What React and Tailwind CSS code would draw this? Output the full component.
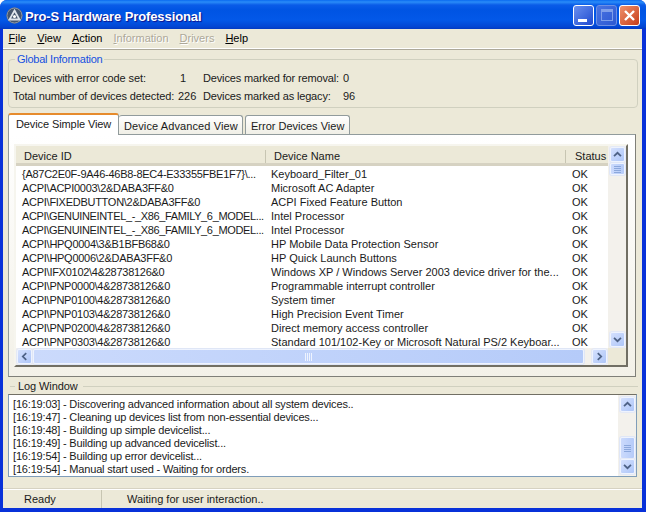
import React from "react";

const rows = [
  ["{A87C2E0F-9A46-46B8-8EC4-E33355FBE1F7}\\...", "Keyboard_Filter_01"],
  ["ACPI\\ACPI0003\\2&DABA3FF&0", "Microsoft AC Adapter"],
  ["ACPI\\FIXEDBUTTON\\2&DABA3FF&0", "ACPI Fixed Feature Button"],
  ["ACPI\\GENUINEINTEL_-_X86_FAMILY_6_MODEL...", "Intel Processor"],
  ["ACPI\\GENUINEINTEL_-_X86_FAMILY_6_MODEL...", "Intel Processor"],
  ["ACPI\\HPQ0004\\3&B1BFB68&0", "HP Mobile Data Protection Sensor"],
  ["ACPI\\HPQ0006\\2&DABA3FF&0", "HP Quick Launch Buttons"],
  ["ACPI\\IFX0102\\4&28738126&0", "Windows XP / Windows Server 2003 device driver for the..."],
  ["ACPI\\PNP0000\\4&28738126&0", "Programmable interrupt controller"],
  ["ACPI\\PNP0100\\4&28738126&0", "System timer"],
  ["ACPI\\PNP0103\\4&28738126&0", "High Precision Event Timer"],
  ["ACPI\\PNP0200\\4&28738126&0", "Direct memory access controller"],
  ["ACPI\\PNP0303\\4&28738126&0", "Standard 101/102-Key or Microsoft Natural PS/2 Keyboar..."],
];

const logs = [
  "[16:19:03] - Discovering advanced information about all system devices..",
  "[16:19:47] - Cleaning up devices list from non-essential devices...",
  "[16:19:48] - Building up simple devicelist...",
  "[16:19:49] - Building up advanced devicelist...",
  "[16:19:54] - Building up error devicelist...",
  "[16:19:54] - Manual start used - Waiting for orders.",
];

function Arrow({ dir }) {
  const d = {
    up: "M3.5 9.5 L7.5 5.5 L11.5 9.5",
    down: "M3.5 5.5 L7.5 9.5 L11.5 5.5",
    left: "M9.5 3.5 L5.5 7.5 L9.5 11.5",
    right: "M5.5 3.5 L9.5 7.5 L5.5 11.5",
  }[dir];
  return (
    <svg width="15" height="15" viewBox="0 0 15 15" fill="none">
      <path d={d} stroke="#4d6185" strokeWidth="2" />
    </svg>
  );
}

function ScrollBtn({ dir }) {
  return (
    <div className="w-[15px] h-[15px] shrink-0 rounded-[2px] border border-[#eef3fe] bg-gradient-to-br from-[#d4e0fd] to-[#aec6f8] flex items-center justify-center shadow-[0_0_0_1px_#e4e9f6]">
      <Arrow dir={dir} />
    </div>
  );
}

function Thumb({ vertical, className }) {
  return (
    <div className={"rounded-[2px] border border-[#eef3fe] shadow-[0_0_0_1px_#dfe6f6] bg-gradient-to-r from-[#cbdafc] to-[#b5cbf9] flex items-center justify-center " + className}>
      <div className={vertical ? "flex flex-col gap-[1px]" : "flex gap-[1px]"}>
        {[0, 1, 2, 3].map((i) => (
          <div key={i} className={vertical ? "w-[7px] h-[1px] bg-[#8ca8dc]" : "w-[1px] h-[8px] bg-[#eef3fe]"} />
        ))}
      </div>
    </div>
  );
}

function MenuItem({ label, disabled }) {
  return (
    <span className={"px-[5.5px] " + (disabled ? "text-[#aca899] [text-shadow:1px_1px_0_#fff]" : "")}>
      <span className="underline">{label[0]}</span>
      {label.slice(1)}
    </span>
  );
}

export default function App() {
  return (
    <div className="w-[646px] h-[512px] overflow-hidden bg-white [font-family:Liberation_Sans,sans-serif] text-[11px] leading-[13px] text-black whitespace-nowrap">
      <div className="w-full h-full flex flex-col rounded-t-[7px] bg-[#0831d9] overflow-hidden">
        {/* title bar */}
        <div className="h-[29px] shrink-0 flex items-center pl-[6px] pr-[6px] bg-[linear-gradient(to_bottom,#0a6af0_0px,#2a8cf8_2px,#0a5ce8_5px,#0054e3_10px,#0358e8_20px,#0345d2_27px,#0339c0_29px)]">
          <svg width="17" height="17" viewBox="0 0 17 17" className="mr-[2px] mt-[1px]">
            <circle cx="8.5" cy="8.5" r="8" fill="#46566e" />
            <circle cx="8.5" cy="8.5" r="7.5" fill="none" stroke="#8c98aa" strokeWidth="1" />
            <path d="M8.5 3.5 L13.5 12.5 H3.5 Z" fill="none" stroke="#dfe4ec" strokeWidth="1.8" />
            <circle cx="8.5" cy="9.5" r="1.5" fill="#fff" />
          </svg>
          <div className="text-white font-bold text-[13px] tracking-[-0.1px] [text-shadow:1px_1px_1px_#0f1089] mt-[3px]">Pro-S Hardware Professional</div>
          <div className="ml-auto flex gap-[2px] mt-[1px]">
            <div className="w-[21px] h-[21px] rounded-[3px] border border-white bg-gradient-to-br from-[#6a8fee] to-[#2048d0] flex items-end pl-[4px] pb-[3px]">
              <div className="w-[9px] h-[3px] bg-white" />
            </div>
            <div className="w-[21px] h-[21px] rounded-[3px] border border-[#6f90e4] bg-gradient-to-br from-[#4a74e2] to-[#2c58d2] flex items-center justify-center">
              <div className="w-[12px] h-[12px] border border-[#7f9fea] border-t-[3px]" />
            </div>
            <div className="w-[21px] h-[21px] rounded-[3px] border border-white bg-gradient-to-br from-[#ee8f6a] to-[#c63c14] flex items-center justify-center">
              <svg width="13" height="13" viewBox="0 0 13 13">
                <path d="M2 2 L11 11 M11 2 L2 11" stroke="#fff" strokeWidth="2.4" />
              </svg>
            </div>
          </div>
        </div>

        {/* client */}
        <div className="flex-1 min-h-0 ml-[3px] mb-[4px] mr-[4px] bg-[#ece9d8] flex flex-col">
          <div className="h-[21px] shrink-0 flex items-center pb-[1px] border-b border-[#aca899] shadow-[inset_0_-1px_0_#fff]">
            <MenuItem label="File" />
            <MenuItem label="View" />
            <MenuItem label="Action" />
            <MenuItem label="Information" disabled />
            <MenuItem label="Drivers" disabled />
            <MenuItem label="Help" />
          </div>

          <div className="flex flex-col pl-[5px] pr-[4px]">
            {/* global info */}
            <fieldset className="mt-[3px] h-[55px] shrink-0 border border-[#d0d0bf] rounded-[4px] pl-[4px] pr-[4px] pt-[6px] text-[#1a1a1a] min-w-0">
              <legend className="ml-[2px] px-[2px] text-[#1550e0] tracking-[-0.25px]">Global Information</legend>
              <div className="grid grid-cols-[165px_25px_140px_auto] gap-y-[5px]">
                <div className="tracking-[-0.1px]">Devices with error code set:</div>
                <div className="pl-[2px]">1</div>
                <div className="tracking-[-0.15px]">Devices marked for removal:</div>
                <div>0</div>
                <div className="tracking-[-0.1px]">Total number of devices detected:</div>
                <div>226</div>
                <div className="tracking-[-0.15px]">Devices marked as legacy:</div>
                <div>96</div>
              </div>
            </fieldset>

            {/* tabs */}
            <div className="h-[21px] mt-[5px] shrink-0 flex items-end relative z-10 text-[#1a1a1a]">
              <div className="h-[22px] w-[111px] pl-[7px] pt-[3px] tracking-[-0.1px] bg-white border-x border-[#919b9c] border-t-[2px] border-t-[#e68b2c] rounded-t-[3px] relative top-[1px]">Device Simple View</div>
              <div className="h-[19px] w-[124px] pl-[5px] pt-[4px] tracking-[0.1px] bg-gradient-to-b from-white to-[#f0efe6] border border-b-0 border-l-0 border-[#919b9c] rounded-t-[3px]">Device Advanced View</div>
              <div className="h-[19px] w-[105px] ml-[2px] pl-[5px] pt-[4px] bg-gradient-to-b from-white to-[#f0efe6] border border-b-0 border-[#919b9c] rounded-t-[3px]">Error Devices View</div>
            </div>

            {/* panel */}
            <div className="h-[243px] shrink-0 mr-[2px] border border-[#919b9c] border-r-[#7f7f78] border-b-[#7f7f78] bg-gradient-to-b from-white to-[#f3f1e8] pl-[5px] pt-[9px]">
              <div className="w-[614px] h-[223px] border-2 border-t-[#f6f5ee] border-l-[#f6f5ee] border-r-[#716f64] border-b-[#716f64] bg-white flex">
                <div className="w-[592px] shrink-0 flex flex-col">
                  <div className="h-[20px] shrink-0 pt-[3px] flex items-center bg-[#ece9d8] border-b-[3px] border-[#d6d2c2] text-[#1a1a1a]">
                    <div className="w-[249px] pl-[8px]">Device ID</div>
                    <div className="w-[300px] pl-[8px] border-l border-[#c7c5b2]">Device Name</div>
                    <div className="pl-[9px] border-l border-[#c7c5b2]">Status</div>
                  </div>
                  <div className="flex-1 min-h-0 pt-[1px] overflow-hidden text-[#1a1a1a]">
                    {rows.map((r, i) => (
                      <div key={i} className="h-[14px] flex items-center">
                        <div className={"w-[249px] pl-[6px] " + (r[0].includes("GENUINE") ? "tracking-[-0.36px]" : "tracking-[-0.27px]")}>{r[0]}</div>
                        <div className="w-[300px] pl-[6px]">{r[1]}</div>
                        <div className="pl-[7px]">OK</div>
                      </div>
                    ))}
                  </div>
                  <div className="h-[17px] shrink-0 flex items-center bg-[#f3f1ec] pl-[1px] pr-[1px]">
                    <ScrollBtn dir="left" />
                    <Thumb className="w-[551px] h-[15px] ml-[1px]" />
                    <div className="flex-1" />
                    <ScrollBtn dir="right" />
                  </div>
                </div>
                <div className="flex-1 flex flex-col">
                  <div className="flex-1 flex flex-col items-center pt-[1px] pb-[1px] bg-[#f3f1ec]">
                    <ScrollBtn dir="up" />
                    <Thumb vertical className="h-[12px] w-[15px] mt-[1px]" />
                    <div className="flex-1" />
                    <ScrollBtn dir="down" />
                  </div>
                  <div className="h-[17px] shrink-0 bg-[#ece9d8]" />
                </div>
              </div>
            </div>

            {/* log window */}
            <div className="h-[13px] mt-[3px] shrink-0 flex items-center gap-[3px]">
              <div className="w-[5px] ml-[2px] h-[1px] bg-[#d0d0bf]" />
              <span className="text-[#1a1a1a] tracking-[-0.1px]">Log Window</span>
              <div className="flex-1 h-[1px] bg-[#d0d0bf] ml-[2px]" />
            </div>
            <div className="h-[83px] mt-[1px] shrink-0 mr-[1px] border border-[#7f9db9] border-t-[#716f64] flex bg-white text-[#1a1a1a]">
              <div className="flex-1 pl-[4px] pt-[3px] tracking-[-0.18px]">
                {logs.map((l) => (
                  <div key={l}>{l}</div>
                ))}
              </div>
              <div className="w-[18px] shrink-0 flex flex-col items-center py-[2px] bg-[#f3f1ec]">
                <ScrollBtn dir="up" />
                <div className="flex-1" />
                <Thumb vertical className="h-[22px] w-[15px]" />
                <ScrollBtn dir="down" />
              </div>
            </div>
          </div>

          {/* status bar */}
          <div className="h-[20px] mt-auto shrink-0 pt-[1px] flex items-center border-t border-[#d6d2c2] shadow-[inset_0_1px_0_#fff] text-[#1a1a1a]">
            <div className="w-[99px] pl-[21px] border-r border-[#c7c5b2] h-[18px] flex items-center">Ready</div>
            <div className="pl-[25px]">Waiting for user interaction..</div>
          </div>
        </div>
      </div>
    </div>
  );
}
